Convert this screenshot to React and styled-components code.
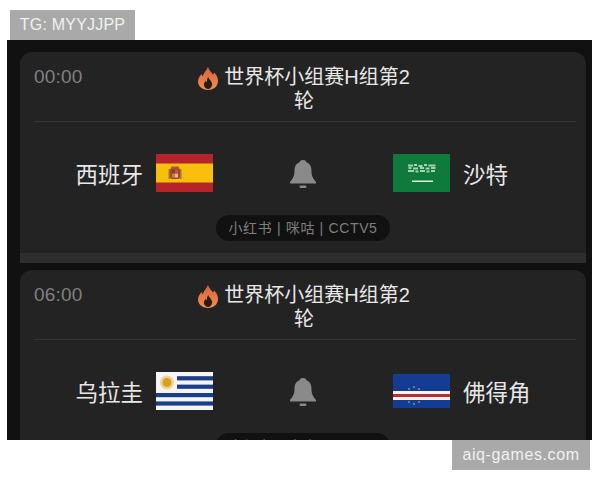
import React from "react";
import styled, { createGlobalStyle } from "styled-components";

const Global = createGlobalStyle`
  html, body { margin: 0; padding: 0; background: #fff; }
  body { font-family: "Liberation Sans", "Noto Sans CJK SC", sans-serif; }
`;
const Page = styled.div`
  width: 600px; height: 480px; overflow: hidden; display: flex; flex-direction: column;
`;
const Tag = styled.div`
  box-sizing: border-box; height: 30px; width: ${p => p.$w}px; margin-left: ${p => p.$x}px;
  margin-top: ${p => p.$top || 0}px; flex: none;
  background: #a9a9a9; color: #f1f1f1; font-size: ${p => p.$size}px; line-height: 30px; text-align: center;
  letter-spacing: ${p => p.$ls || 0}px;
`;
const Panel = styled.div`
  width: 585px; height: 400px; margin-left: 7px; flex: none; overflow: hidden;
  box-sizing: border-box; padding: 12px 6px 0 13px; background: #111;
  display: flex; flex-direction: column; gap: 7px;
`;
const Card = styled.section`
  flex: none; height: 211px; box-sizing: border-box; background: #232323;
  border-radius: 12px 12px 0 0; border-bottom: 10px solid #2e2e2e; padding: 0 10px 0 14px;
  display: flex; flex-direction: column; align-items: stretch;
`;
const Header = styled.header`
  display: grid; grid-template-columns: 1fr 212px 1fr; height: 70px; box-sizing: border-box;
  padding: 12px 0 0; border-bottom: 1px solid #343434; flex: none;
`;
const Time = styled.div`
  color: #808080; font-size: 19px; line-height: 24px; letter-spacing: 0.2px; padding-top: 1px;
`;
const Title = styled.div`
  color: #e8e8e8; font-size: 20px; line-height: 23px; text-align: center;
  font-family: "Liberation Sans", "Noto Sans CJK SC", sans-serif; transform: translate(-1px, 2px);
  font-weight: 400;
`;
const FlameSvg = styled.svg`
  width: 20px; height: 23px; margin-right: 6px; vertical-align: -6px;
`;
const Match = styled.div`
  display: grid; grid-template-columns: 1fr 180px 1fr; align-items: center;
  height: 84px; margin-left: -14px; margin-right: -10px; margin-top: 9px; flex: none;
`;
const Team = styled.div`
  display: flex; align-items: center; gap: 13px;
  justify-content: ${p => (p.$end ? "flex-end" : "flex-start")};
`;
const Name = styled.span`
  color: #e8e8e8; font-size: 22.5px; line-height: 30px;
  font-family: "Noto Sans CJK SC", sans-serif; font-weight: 400;
`;
const FlagSvg = styled.svg`
  width: 57px; height: 38px; display: block; flex: none;
`;
const BellWrap = styled.div`
  display: flex; justify-content: center; padding-top: 1px;
`;
const BellSvg = styled.svg`
  width: 26px; height: 28px; display: block;
`;
const Sources = styled.div`
  align-self: center; margin-top: 0; margin-left: -4px; height: 26px; width: 174px; border-radius: 13px; background: #111;
  color: #7f7f7f; font-size: 14px; line-height: 26px; text-align: center; white-space: nowrap;
  font-family: "Liberation Sans", "Noto Sans CJK SC", sans-serif; flex: none; letter-spacing: 0.65px;
`;

const Flame = () => (
  <FlameSvg viewBox="0 0 20 23">
    <defs>
      <linearGradient id="fl" x1="0" y1="0" x2="0" y2="1">
        <stop offset="0" stopColor="#d9603c" />
        <stop offset="1" stopColor="#f09050" />
      </linearGradient>
    </defs>
    <path fill="url(#fl)" d="M10 0c1 3.500 3.500 5 5 7.500.6-.5 1-1.200 1.200-2C18.800 8 20 10.800 20 14c0 5.200-4.200 9-10 9S0 19.200 0 14.500c0-3.500 2-5.500 3.500-7.500.3 1 .6 1.700 1.300 2.300C5.500 6 8 4 10 0z" />
    <path fill="#2a1d18" d="M10.200 10c.5 2 2.800 3.500 3.800 6.200.8 2.700-1.500 5.800-4 5.800s-4.500-2.600-4-5.200c.4-1.500 1.300-2.300 2-3 .1.800.4 1.200 1 1.500-.2-1.800.1-3.500 1.200-5.300z" />
  </FlameSvg>
);

const Bell = () => (
  <BellSvg viewBox="0 0 26 28">
    <path fill="#8a8a8a" d="M13 0c2.600 0 3.200 1.500 3.500 2.300C20.500 3.800 21.500 7.500 21.500 11c0 5 1.500 7.500 4.500 11v1.500H0V22c3-3.500 4.500-6 4.500-11 0-3.500 1-7.200 5-8.700C9.800 1.500 10.400 0 13 0z" />
    <rect x="9.500" y="25.500" width="7" height="2.500" rx="1.200" fill="#8a8a8a" />
  </BellSvg>
);

const Spain = () => (
  <FlagSvg viewBox="0 0 57 38">
    <rect width="57" height="38" fill="#b5242a" />
    <rect y="9.500" width="57" height="19" fill="#f8bf0c" />
    <rect x="14" y="14" width="10" height="11" rx="2" fill="#a8452e" />
    <rect x="16" y="15.500" width="3" height="4" fill="#8c3a34" />
    <rect x="19" y="19.500" width="3" height="4" fill="#d9c0a0" />
    <rect x="16" y="19.500" width="3" height="4" fill="#c9823a" />
    <rect x="19" y="15.500" width="3" height="4" fill="#c8533a" />
    <rect x="12.500" y="15" width="1.500" height="10" fill="#a07a30" />
    <rect x="24" y="15" width="1.500" height="10" fill="#a07a30" />
    <rect x="15" y="12.500" width="8" height="2" rx="1" fill="#a05a30" />
  </FlagSvg>
);
const Saudi = () => (
  <FlagSvg viewBox="0 0 57 38">
    <rect width="57" height="38" fill="#0f7a3c" />
    <path
      d="M15 11.500h5M21 11h3M25.500 12h4M31 11h3M35.500 11.500h7M15.500 14h3M20 14.500h5M27 14h4M32.500 14.500h4M38 14h4.500M15 17h6M22.500 17.500h3M27 17h5M33.500 17.500h3M38 17h4"
      stroke="#c0e2c6" strokeWidth="2" opacity="0.85"
    />
    <rect x="19" y="26.500" width="21" height="1.500" fill="#d8eedc" />
  </FlagSvg>
);
const Uruguay = () => (
  <FlagSvg viewBox="0 0 57 38">
    <rect width="57" height="38" fill="#f5f5f5" />
    {[4.200, 12.600, 21, 29.400].map((y, i) => (
      <rect key={y} x={i < 2 ? 21 : 0} y={y} width={i < 2 ? 36 : 57} height="4.200" fill="#1a3f8a" />
    ))}
    <circle cx="11" cy="10.500" r="7" fill="#e8b84a" opacity="0.55" />
    <circle cx="11" cy="10.500" r="4.500" fill="#d9a020" />
  </FlagSvg>
);
const CapeVerde = () => (
  <FlagSvg viewBox="0 0 57 38">
    <rect width="57" height="34" y="2" fill="#143c92" />
    <rect y="19" width="57" height="9" fill="#f3f3f3" />
    <rect y="22" width="57" height="3" fill="#b8302e" />
    {[[16,17],[21,15],[26,17],[16,30],[21,32],[26,30]].map(([x, y]) => (
      <circle key={x + "-" + y} cx={x} cy={y} r="0.800" fill="#d9c98a" />
    ))}
  </FlagSvg>
);

const MatchCard = ({ time, home, away, HomeFlag, AwayFlag, src }) => (
  <Card>
    <Header>
      <Time>{time}</Time>
      <Title><Flame />世界杯小组赛H组第2轮</Title>
      <span />
    </Header>
    <Match>
      <Team $end><Name>{home}</Name><HomeFlag /></Team>
      <BellWrap><Bell /></BellWrap>
      <Team><AwayFlag /><Name>{away}</Name></Team>
    </Match>
    <Sources>{src}</Sources>
  </Card>
);

export default function App() {
  return (
    <Page>
      <Global />
      <Tag $x={10} $top={10} $w={125} $size={16} $ls={0.2}>TG: MYYJJPP</Tag>
      <Panel>
        <MatchCard time="00:00" home="西班牙" away="沙特" HomeFlag={Spain} AwayFlag={Saudi} src="小红书 | 咪咕 | CCTV5" />
        <MatchCard time="06:00" home="乌拉圭" away="佛得角" HomeFlag={Uruguay} AwayFlag={CapeVerde} src="小红书 | 咪咕 | CCTV5" />
      </Panel>
      <Tag $x={452} $w={138} $size={16} $ls={0.6}>aiq-games.com</Tag>
    </Page>
  );
}
